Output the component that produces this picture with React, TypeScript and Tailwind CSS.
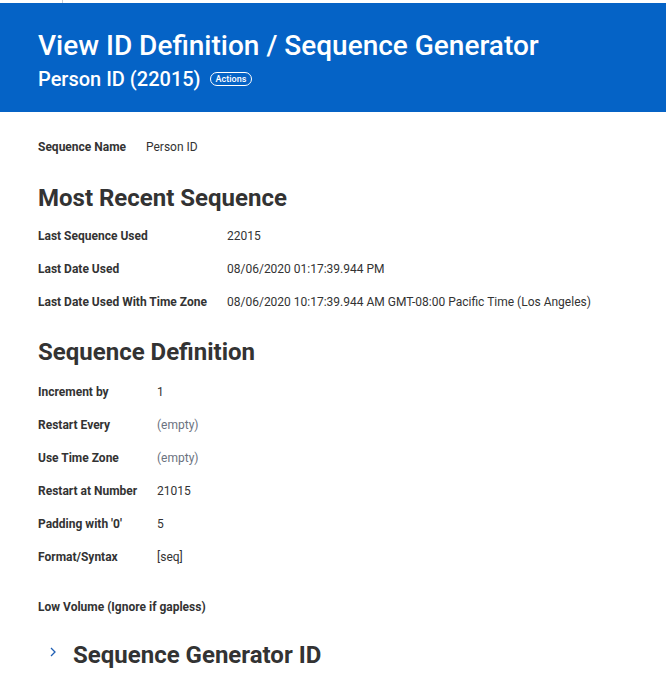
import React from "react";

const font = { fontFamily: "Roboto, 'Noto Sans', Arial, sans-serif" };

function Field({ label, value, labelW, muted }: { label: string; value: string; labelW: string; muted?: boolean }) {
  return (
    <div className="flex items-center h-[33px]">
      <div className={`${labelW} shrink-0 text-[12px] font-bold text-[#333333]`}>{label}</div>
      <div className={`text-[12px] ${muted ? "text-[#6b7280]" : "text-[#333333]"}`}>{value}</div>
    </div>
  );
}

export default function App() {
  return (
    <div className="w-[666px] h-[679px] bg-white overflow-hidden relative" style={font}>
      <div className="h-[3px] bg-white relative">
        <div className="absolute left-[62px] top-0 w-px h-[3px] bg-[#c9ced6]" />
      </div>
      <header className="h-[109px] bg-[#0563c6] text-white px-[38px] pt-[27px]">
        <h1 className="text-[28px] leading-[32px] font-medium">View ID Definition / Sequence Generator</h1>
        <div className="flex items-center gap-[9px] mt-[4px]">
          <span className="text-[20px] leading-[26px] font-medium">Person ID (22015)</span>
          <span className="border border-white rounded-full px-[5px] text-[9px] leading-[12px] font-medium">Actions</span>
        </div>
      </header>

      <main className="px-[38px] pt-[23px]">
        <div className="flex items-center h-[24px]">
          <div className="w-[108px] text-[12px] font-bold text-[#333333]">Sequence Name</div>
          <div className="text-[12px] text-[#333333]">Person ID</div>
        </div>

        <h2 className="mt-[24px] text-[24px] leading-[30px] font-bold text-[#333333]">Most Recent Sequence</h2>
        <div className="mt-[6px]">
          <Field label="Last Sequence Used" value="22015" labelW="w-[189px]" />
          <Field label="Last Date Used" value="08/06/2020 01:17:39.944 PM" labelW="w-[189px]" />
          <Field label="Last Date Used With Time Zone" value="08/06/2020 10:17:39.944 AM GMT-08:00 Pacific Time (Los Angeles)" labelW="w-[189px]" />
        </div>

        <h2 className="mt-[19px] text-[24px] leading-[30px] font-bold text-[#333333]">Sequence Definition</h2>
        <div className="mt-[8px]">
          <Field label="Increment by" value="1" labelW="w-[119px]" />
          <Field label="Restart Every" value="(empty)" labelW="w-[119px]" muted />
          <Field label="Use Time Zone" value="(empty)" labelW="w-[119px]" muted />
          <Field label="Restart at Number" value="21015" labelW="w-[119px]" />
          <Field label="Padding with '0'" value="5" labelW="w-[119px]" />
          <Field label="Format/Syntax" value="[seq]" labelW="w-[119px]" />
        </div>

        <div className="mt-[25px] text-[12px] font-bold text-[#333333]">Low Volume (Ignore if gapless)</div>

        <div className="mt-[24px] flex items-center ml-[10px]">
          <svg width="10" height="12" viewBox="0 0 10 12" className="mr-[15px] -mt-[6px]">
            <path d="M3 2 L7 6 L3 10" fill="none" stroke="#1f5fb4" strokeWidth="1.3" />
          </svg>
          <h2 className="text-[24px] leading-[30px] font-bold text-[#333333]">Sequence Generator ID</h2>
        </div>
      </main>
    </div>
  );
}
